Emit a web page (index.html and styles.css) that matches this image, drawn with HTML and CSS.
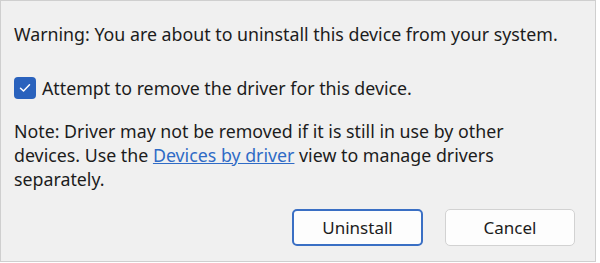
FILE: index.html
```html
<!DOCTYPE html>
<html>
<head>
<meta charset="utf-8">
<link rel="stylesheet" href="styles.css">
</head>
<body>
<div class="dialog">
  <p class="warning">Warning: You are about to uninstall this device from your system.</p>
  <label class="check-row">
    <span class="checkbox">
      <svg width="12" height="10" viewBox="0 0 12 10"><path d="M1.5 5.2 L4.5 8 L10.5 1.8" fill="none" stroke="#ffffff" stroke-width="1.5" stroke-linecap="round" stroke-linejoin="round"/></svg>
    </span>
    <span class="check-label">Attempt to remove the driver for this device.</span>
  </label>
  <p class="note">Note: Driver may not be removed if it is still in use by other<br>devices. Use the <a class="link" href="#">Devices by driver</a> view to manage drivers<br>separately.</p>
  <div class="buttons">
    <button class="btn btn-primary">Uninstall</button>
    <button class="btn">Cancel</button>
  </div>
</div>
</body>
</html>
```

FILE: styles.css
```css
html, body {
  margin: 0;
  padding: 0;
  background: #ffffff;
}
.dialog {
  box-sizing: border-box;
  width: 596px;
  height: 262px;
  border: 1px solid #cfcfcf;
  background: #f0f0f0;
  padding: 21px 20px 0 13px;
  display: flex;
  flex-direction: column;
  font-family: "Noto Sans", sans-serif;
  font-size: 17.8px;
  color: #1c1c1c;
}
.warning {
  margin: 0;
  line-height: 24px;
}
.check-row {
  display: flex;
  align-items: center;
  gap: 6px;
  margin-top: 30px;
  height: 24px;
}
.checkbox {
  width: 22px;
  height: 22px;
  border-radius: 4px;
  background: #2a62bd;
  display: flex;
  align-items: center;
  justify-content: center;
}
.check-label {
  line-height: 24px;
}
.note {
  margin: 19px 0 0 0;
  line-height: 24px;
}
.link {
  color: #2f6bc6;
  text-decoration: underline;
}
.buttons {
  display: flex;
  justify-content: flex-end;
  gap: 22px;
  margin-top: 18px;
}
.btn {
  box-sizing: border-box;
  height: 37px;
  width: 130px;
  border: 1px solid #d2d2d2;
  border-radius: 5px;
  background: #fdfdfd;
  font-family: "Noto Sans", sans-serif;
  font-size: 17px;
  color: #1c1c1c;
  padding: 0;
}
.btn-primary {
  width: 131px;
  border: 2px solid #3a6fc4;
}
```
